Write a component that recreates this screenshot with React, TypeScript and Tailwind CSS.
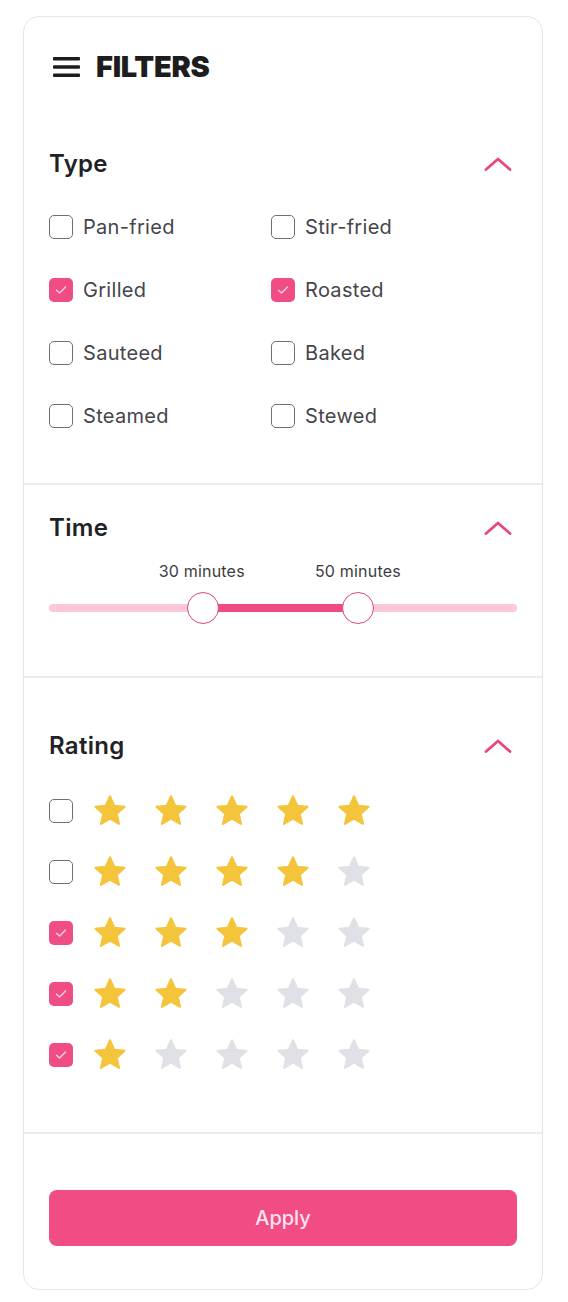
import React from "react";

const types = [
  { label: "Pan-fried", checked: false },
  { label: "Stir-fried", checked: false },
  { label: "Grilled", checked: true },
  { label: "Roasted", checked: true },
  { label: "Sauteed", checked: false },
  { label: "Baked", checked: false },
  { label: "Steamed", checked: false },
  { label: "Stewed", checked: false },
];

const ratings = [
  { stars: 5, checked: false },
  { stars: 4, checked: false },
  { stars: 3, checked: true },
  { stars: 2, checked: true },
  { stars: 1, checked: true },
];

function Box({ checked }: { checked: boolean }) {
  return checked ? (
    <span className="flex h-6 w-6 shrink-0 items-center justify-center rounded-[5px] bg-[#f04c85]">
      <svg width="12" height="10" viewBox="0 0 12 10" fill="none">
        <path d="M1.5 5.2 L4.6 8 L10.5 2" stroke="#fbd0df" strokeWidth="1.4" strokeLinecap="round" strokeLinejoin="round" />
      </svg>
    </span>
  ) : (
    <span className="block h-6 w-6 shrink-0 rounded-[5px] border-[1.5px] border-[#707070] bg-white" />
  );
}

function Chevron() {
  return (
    <svg width="28" height="16" viewBox="0 0 28 16" fill="none" className="mr-[5px]">
      <path d="M2 13.5 L14 3 L26 13.5" stroke="#e8467c" strokeWidth="2.8" strokeLinecap="round" strokeLinejoin="round" />
    </svg>
  );
}

function Star({ on }: { on: boolean }) {
  return (
    <svg width="34" height="34" viewBox="0 0 24 24" className="shrink-0">
      <path
        d="M12 1.6 L15 8.2 L22.3 9 L16.8 13.9 L18.4 21.1 L12 17.4 L5.6 21.1 L7.2 13.9 L1.7 9 L9 8.2 Z"
        fill={on ? "#f4c43a" : "#dfe1e6"}
        stroke={on ? "#f4c43a" : "#dfe1e6"}
        strokeWidth="1.4"
        strokeLinejoin="round"
      />
    </svg>
  );
}

function Heading({ title }: { title: string }) {
  return (
    <div className="flex h-8 items-center justify-between">
      <h2 className="text-[24px] font-semibold tracking-[0.3px] text-[#222226]">{title}</h2>
      <Chevron />
    </div>
  );
}

export default function App() {
  return (
    <div className="min-h-[1302px] bg-white pt-4 pl-[23px] font-['Inter',sans-serif]">
      <div className="w-[520px] h-[1274px] rounded-2xl border border-[#e4e5e8] bg-white flex flex-col">
        {/* header + type */}
        <div className="px-[25px]">
          <div className="flex h-[99px] items-center gap-[15px] pl-1">
            <svg width="28" height="22" viewBox="0 0 28 22" fill="none">
              <rect x="0" y="1" width="27" height="3.4" rx="1" fill="#1d1d20" />
              <rect x="0" y="9.3" width="27" height="3.4" rx="1" fill="#1d1d20" />
              <rect x="0" y="17.6" width="27" height="3.4" rx="1" fill="#1d1d20" />
            </svg>
            <span className="text-[29px] font-black tracking-[-0.3px] text-[#1d1d20]">FILTERS</span>
          </div>
          <div className="pt-8">
            <Heading title="Type" />
            <div className="mt-[35px] grid grid-cols-[222px_1fr] gap-y-[39px] pb-[55px]">
              {types.map((t) => (
                <label key={t.label} className="flex h-6 items-center gap-[10px]">
                  <Box checked={t.checked} />
                  <span className="text-[20px] tracking-[0.3px] text-[#45454a]">{t.label}</span>
                </label>
              ))}
            </div>
          </div>
        </div>

        {/* time */}
        <div className="border-t-2 border-[#ececef] px-[25px] pt-[27px] pb-[52px]">
          <Heading title="Time" />
          <div className="relative mt-[17px] h-[63px]">
            <span className="absolute top-0 left-[33%] -translate-x-[52%] text-[16px] leading-5 tracking-[0.2px] text-[#3c3c40]">30 minutes</span>
            <span className="absolute top-0 left-[66%] -translate-x-[50%] text-[16px] leading-5 tracking-[0.2px] text-[#3c3c40]">50 minutes</span>
            <div className="absolute left-0 right-0 top-[43px] h-2 rounded-full bg-[#fbc8d9]" />
            <div className="absolute left-[33%] right-[34%] top-[43px] h-2 bg-[#ef4a82]" />
            <div className="absolute left-[33%] top-[31px] h-8 w-8 -translate-x-1/2 rounded-full border-[1.5px] border-[#e0477a] bg-white" />
            <div className="absolute left-[66%] top-[31px] h-8 w-8 -translate-x-1/2 rounded-full border-[1.5px] border-[#e0477a] bg-white" />
          </div>
        </div>

        {/* rating */}
        <div className="border-t-2 border-[#ececef] px-[25px] pt-[52px] pb-[60px]">
          <Heading title="Rating" />
          <div className="mt-8 flex flex-col gap-[27px]">
            {ratings.map((r) => (
              <div key={r.stars} className="flex h-[34px] items-center">
                <Box checked={r.checked} />
                <div className="ml-5 flex gap-[27px]">
                  {[1, 2, 3, 4, 5].map((i) => (
                    <Star key={i} on={i <= r.stars} />
                  ))}
                </div>
              </div>
            ))}
          </div>
        </div>

        {/* apply */}
        <div className="border-t-2 border-[#ececef] px-[25px] pt-14">
          <button className="h-14 w-full rounded-lg bg-[#f24c84] text-[20px] font-medium text-[#fde4ee]">
            Apply
          </button>
        </div>
      </div>
    </div>
  );
}
